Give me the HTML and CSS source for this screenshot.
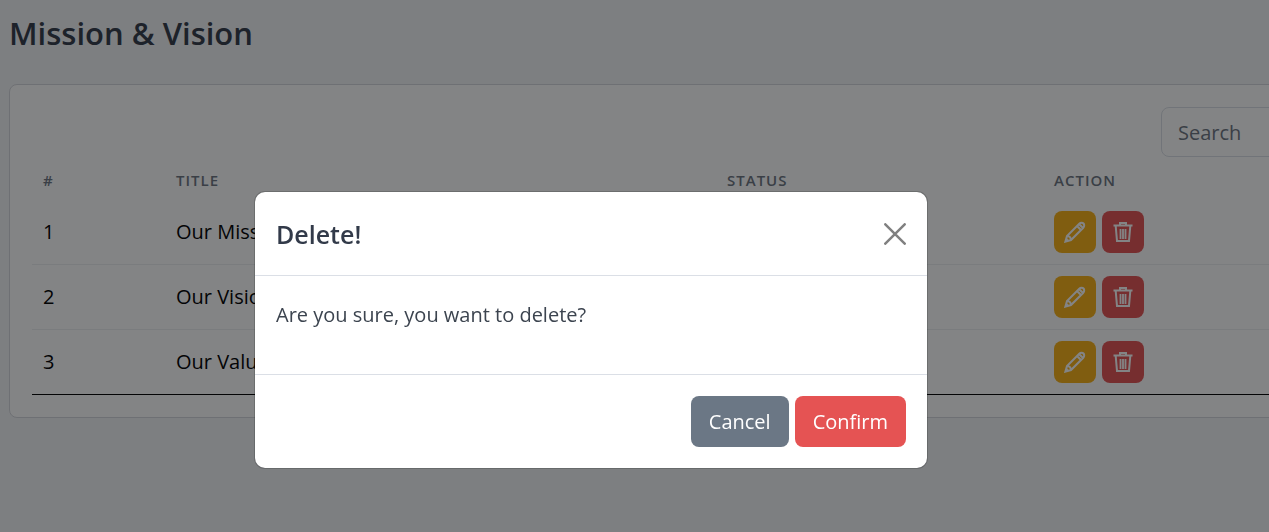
FILE: index.html
```
<!DOCTYPE html>
<html lang="en">
<head>
<meta charset="utf-8">
<title>Mission &amp; Vision</title>
<link rel="stylesheet" href="styles.css">
</head>
<body>
<svg class="sprite" aria-hidden="true">
  <symbol id="pencil" viewBox="0 0 22 22"><path d="M1.4 20.6 L3 15 L15.3 2.7 Q16.2 1.8 17.5 1.8 Q20.2 1.8 20.2 4.5 Q20.2 5.8 19.3 6.7 L7 19 Z M3 15 Q6.6 15.2 7 19 M13 5 L17 9 M15 3 L19 7" fill="none" stroke="currentColor" stroke-width="2"/><path d="M1 21 L2.4 16.8 L5.2 19.6 Z" fill="currentColor"/></symbol>
  <symbol id="trash" viewBox="0 0 22 22"><path d="M1.5 4.5 H20.5 M8 4.5 V2 H14 V4.5 M3.7 5 L5 20 H17 L18.3 5" fill="none" stroke="currentColor" stroke-width="2"/><path d="M8.5 8 V18 M11 8 V18 M13.5 8 V18" stroke="currentColor" stroke-width="1.8"/></symbol>
</svg>
<main class="page">
  <h1 class="page-title">Mission &amp; Vision</h1>
  <section class="card">
    <div class="toolbar"><input class="search" type="text" placeholder="Search" aria-label="Search"></div>
    <table class="table">
      <colgroup><col class="col-num"><col class="col-title"><col class="col-status"><col></colgroup>
      <thead><tr><th>#</th><th>Title</th><th>Status</th><th>Action</th></tr></thead>
      <tbody>
        <tr><td>1</td><td>Our Mission</td><td></td><td><div class="actions"><button class="icon-btn edit" aria-label="Edit"><svg><use href="#pencil"/></svg></button><button class="icon-btn remove" aria-label="Delete"><svg><use href="#trash"/></svg></button></div></td></tr>
        <tr><td>2</td><td>Our Vision</td><td></td><td><div class="actions"><button class="icon-btn edit" aria-label="Edit"><svg><use href="#pencil"/></svg></button><button class="icon-btn remove" aria-label="Delete"><svg><use href="#trash"/></svg></button></div></td></tr>
        <tr><td>3</td><td>Our Values</td><td></td><td><div class="actions"><button class="icon-btn edit" aria-label="Edit"><svg><use href="#pencil"/></svg></button><button class="icon-btn remove" aria-label="Delete"><svg><use href="#trash"/></svg></button></div></td></tr>
      </tbody>
    </table>
  </section>
</main>
<div class="backdrop">
  <div class="modal" role="dialog" aria-modal="true" aria-labelledby="modal-title">
    <header class="modal-header">
      <h2 class="modal-title" id="modal-title">Delete!</h2>
      <button class="close" aria-label="Close"><svg viewBox="0 0 22 22"><path d="M1.3 1.3 L20.7 20.7 M20.7 1.3 L1.3 20.7" stroke="currentColor" stroke-width="2.5" stroke-linecap="round"/></svg></button>
    </header>
    <div class="modal-body"><p>Are you sure, you want to delete?</p></div>
    <footer class="modal-footer"><button class="btn cancel">Cancel</button><button class="btn confirm">Confirm</button></footer>
  </div>
</div>
</body>
</html>
```
FILE: styles.css
```
* { box-sizing: border-box; }
body {
  margin: 0;
  min-height: 100vh;
  overflow: hidden;
  background: #f3f4f7;
  color: #3c444f;
  font: 20px/32px "Segoe UI", "Open Sans", "Noto Sans", sans-serif;
}
h1, h2, p { margin: 0; }
button, input { font: inherit; }
button { border: 0; cursor: pointer; }
.sprite { display: none; }

.page { width: calc(100% + 160px); padding: 12px 9px; }
.page-title { font-size: 31px; line-height: 42px; font-weight: 600; color: #323a49; }
.card {
  margin-top: 30px;
  padding: 22px;
  background: #fff;
  border: 1px solid #d5d7dc;
  border-radius: 8px;
}
.toolbar { display: flex; justify-content: flex-end; }
.search {
  width: 236px;
  height: 50px;
  padding: 8px 16px;
  border: 1px solid #dbdfe6;
  border-radius: 8px;
  background: #fff;
}
.search::placeholder { color: #6d7581; opacity: 1; }

.table { width: 100%; table-layout: fixed; border-collapse: separate; border-spacing: 0; color: #000; }
.col-num { width: 133px; }
.col-title { width: 551px; }
.col-status { width: 327px; }
.table th {
  height: 43px;
  padding: 2px 11px 0;
  text-align: left;
  text-transform: uppercase;
  font-size: 15px;
  line-height: 20px;
  font-weight: 600;
  letter-spacing: 1px;
  color: #6d7581;
}
.table td { height: 65px; padding: 0 11px; border-bottom: 1px solid #eceef1; }
.table tr:last-child td { border-bottom-color: #000; }
.actions { display: flex; gap: 6px; }
.icon-btn { display: grid; place-items: center; width: 42px; height: 42px; padding: 0; border-radius: 8px; color: #fff; }
.icon-btn svg { width: 22px; height: 22px; }
.edit { background: #f9b115; }
.remove { background: #e55353; }

.backdrop {
  position: fixed;
  inset: 0;
  display: flex;
  justify-content: center;
  align-items: flex-start;
  padding: 191px 87px 0 0;
  background: rgba(8, 10, 12, .5);
}
.modal {
  width: 674px;
  background: #fff;
  background-clip: padding-box;
  border: 1px solid rgba(8, 10, 12, .18);
  border-radius: 11px;
}
.modal-header { display: flex; justify-content: space-between; align-items: center; height: 84px; padding: 21px; border-bottom: 1px solid #dbdfe6; }
.modal-title { font-size: 25px; line-height: 40px; font-weight: 600; color: #323a49; }
.close { display: grid; padding: 0; background: none; color: #808080; }
.close svg { width: 22px; height: 22px; }
.modal-body { padding: 23px 21px 43px; }
.modal-footer { display: flex; justify-content: flex-end; gap: 6px; padding: 21px; border-top: 1px solid #dbdfe6; }
.btn { height: 51px; padding: 0 18px; border-radius: 8px; color: #fff; }
.cancel { background: #6b7785; }
.confirm { background: #e55353; }
```
